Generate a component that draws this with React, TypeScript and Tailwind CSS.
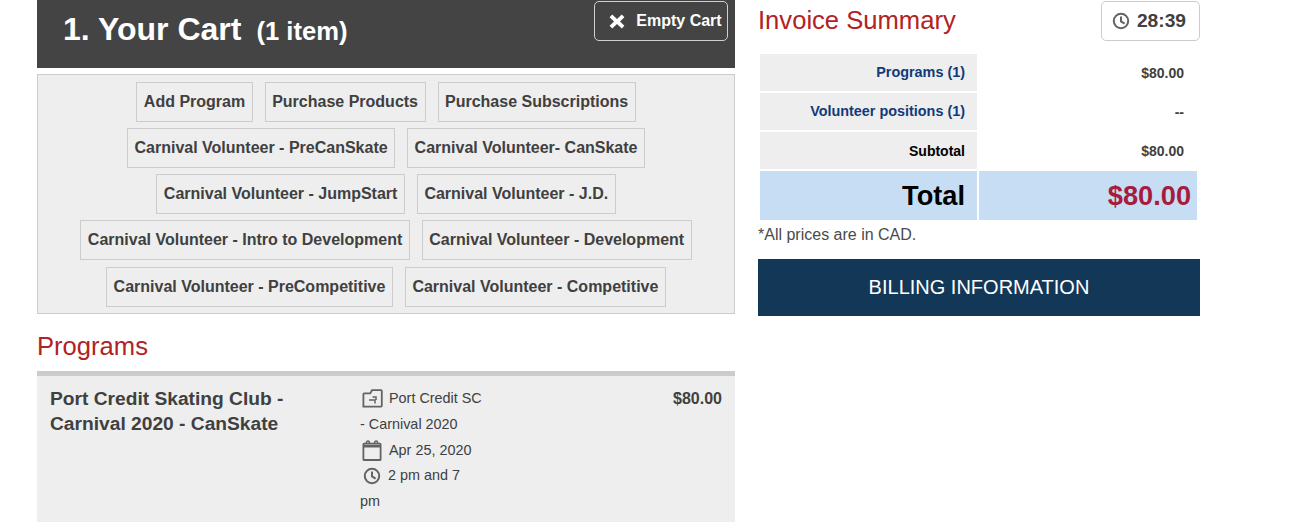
const buttonRows = [
  ['Add Program', 'Purchase Products', 'Purchase Subscriptions'],
  ['Carnival Volunteer - PreCanSkate', 'Carnival Volunteer- CanSkate'],
  ['Carnival Volunteer - JumpStart', 'Carnival Volunteer - J.D.'],
  ['Carnival Volunteer - Intro to Development', 'Carnival Volunteer - Development'],
  ['Carnival Volunteer - PreCompetitive', 'Carnival Volunteer - Competitive'],
];

function ClockIcon() {
  return (
    <svg width="18" height="18" viewBox="0 0 18 18" fill="none" stroke="#636363" strokeWidth="2" className="shrink-0">
      <circle cx="9" cy="9" r="7.2" />
      <path d="M9 4.4V9.4L12.6 11.6" />
    </svg>
  );
}

function LocationIcon() {
  return (
    <svg width="21" height="19" viewBox="0 0 21 19" fill="none" stroke="#636363" strokeWidth="1.8" className="shrink-0">
      <path d="M1.4 17.6V5.2C1.4 4.7 1.7 4.4 2.2 4.4H8.2L10 1.2H19C19.5 1.2 19.8 1.5 19.8 2V16.8C19.8 17.3 19.5 17.6 19 17.6Z" />
      <path d="M7 11H13V14.5M10.5 8L14 8V11" strokeWidth="1.5" />
    </svg>
  );
}

function CalendarIcon() {
  return (
    <svg width="20" height="21" viewBox="0 0 20 21" fill="none" stroke="#636363" strokeWidth="1.8" className="shrink-0">
      <rect x="1.4" y="3.6" width="17.2" height="16.4" rx="0.6" />
      <path d="M1.4 6.2H18.6" strokeWidth="2.6" />
      <path d="M4.4 4V2.6C4.4 0.6 7.4 0.6 7.4 2.6V4M12.6 4V2.6C12.6 0.6 15.6 0.6 15.6 2.6V4" strokeWidth="1.5" />
    </svg>
  );
}

export default function App() {
  return (
    <div className="h-[522px] overflow-hidden bg-white text-[#404040] font-['Liberation_Sans',Arial,sans-serif]">
      <div className="flex items-start pl-[37px]">
        {/* Cart column */}
        <div className="w-[698px] shrink-0">
          <div className="flex h-[68px] items-start justify-between bg-[#444444] pl-[26px] pr-[7px] pt-px text-white">
            <h1 className="mt-2 text-[32px] leading-[40px] font-bold">
              1. Your Cart
              <span className="ml-[15px] text-[25.6px]">(1 item)</span>
            </h1>
            <button className="flex h-10 w-[134px] items-center justify-center gap-[11px] rounded-[5px] border border-[#d0d0d0] pl-[9px] text-base font-bold">
              <svg width="16" height="15" viewBox="0 0 16 15" fill="white" className="shrink-0">
                <path d="M3.2 0.6L8 5L12.8 0.6L15.4 3.2L11 7.5L15.4 11.8L12.8 14.4L8 10L3.2 14.4L0.6 11.8L5 7.5L0.6 3.2Z" />
              </svg>
              Empty Cart
            </button>
          </div>

          <div className="mt-1.5 flex h-[240px] flex-col items-center gap-[6.15px] border border-[#cccccc] bg-[#eeeeee] pt-[7px]">
            {buttonRows.map((row) => (
              <div key={row[0]} className="flex gap-3">
                {row.map((label) => (
                  <button key={label} className="h-10 border border-[#cccccc] px-[6.5px] text-base font-bold whitespace-nowrap">
                    {label}
                  </button>
                ))}
              </div>
            ))}
          </div>

          <h2 className="mt-[15px] text-[25.6px] leading-[34px] text-[#b22222]">Programs</h2>

          <div className="mt-2 flex h-[200px] border-t-[5px] border-[#cccccc] bg-[#eeeeee] pt-2.5">
            <div className="w-[323px] shrink-0 pl-[13px] text-[19.2px] leading-[25px] font-bold">
              Port Credit Skating Club -<br />
              Carnival 2020 - CanSkate
            </div>
            <div className="w-[130px] shrink-0 text-[14.4px] leading-[25.75px]">
              <div className="flex items-center gap-[6px] pl-[2px]">
                <LocationIcon />
                Port Credit SC
              </div>
              <div>- Carnival 2020</div>
              <div className="flex items-center gap-[7px] pl-[2px]">
                <CalendarIcon />
                Apr 25, 2020
              </div>
              <div className="flex items-center gap-[7px] pl-[3px]">
                <ClockIcon />
                2 pm and 7
              </div>
              <div>pm</div>
            </div>
            <div className="flex-1 pr-[13px] text-right text-base leading-[26px] font-bold">$80.00</div>
          </div>
        </div>

        {/* Invoice column */}
        <div className="ml-[23px] w-[442px] shrink-0">
          <div className="flex h-[54px] items-start justify-between">
            <h2 className="mt-[3px] text-[25.6px] leading-[34px] text-[#b22222]">Invoice Summary</h2>
            <div className="mt-px flex h-10 w-[99px] items-center justify-center gap-[7px] rounded-[5px] border border-[#cccccc] pr-[3px] text-[19.2px] font-bold">
              <ClockIcon />
              28:39
            </div>
          </div>

          <div className="ml-0.5 grid w-[437px] grid-cols-[217px_218px] gap-0.5 text-[14.4px] font-bold">
            <div className="flex h-[37px] items-center justify-end bg-[#eeeeee] pr-3 text-[#123a7a]">Programs (1)</div>
            <div className="flex h-[37px] items-center justify-end pr-[13px] text-sm">$80.00</div>
            <div className="flex h-[37px] items-center justify-end bg-[#eeeeee] pr-3 text-[#123a7a]">Volunteer positions (1)</div>
            <div className="flex h-[37px] items-center justify-end pr-[13px] text-sm">--</div>
            <div className="flex h-[37px] items-center justify-end bg-[#eeeeee] pr-3 text-sm text-black">Subtotal</div>
            <div className="flex h-[37px] items-center justify-end pr-[13px] text-sm">$80.00</div>
            <div className="flex h-[49px] items-center justify-end bg-[#c7ddf3] pr-3 pt-0.5 text-[27.2px] text-black">Total</div>
            <div className="flex h-[49px] items-center justify-end bg-[#c7ddf3] pr-1.5 pt-0.5 text-[27.2px] text-[#a51c3e]">$80.00</div>
          </div>

          <p className="mt-1 text-base leading-[22px] text-[#4a4a4a]">*All prices are in CAD.</p>

          <button className="mt-[13px] h-[57px] w-full bg-[#133857] pb-px text-xl text-white">BILLING INFORMATION</button>
        </div>
      </div>
    </div>
  );
}
